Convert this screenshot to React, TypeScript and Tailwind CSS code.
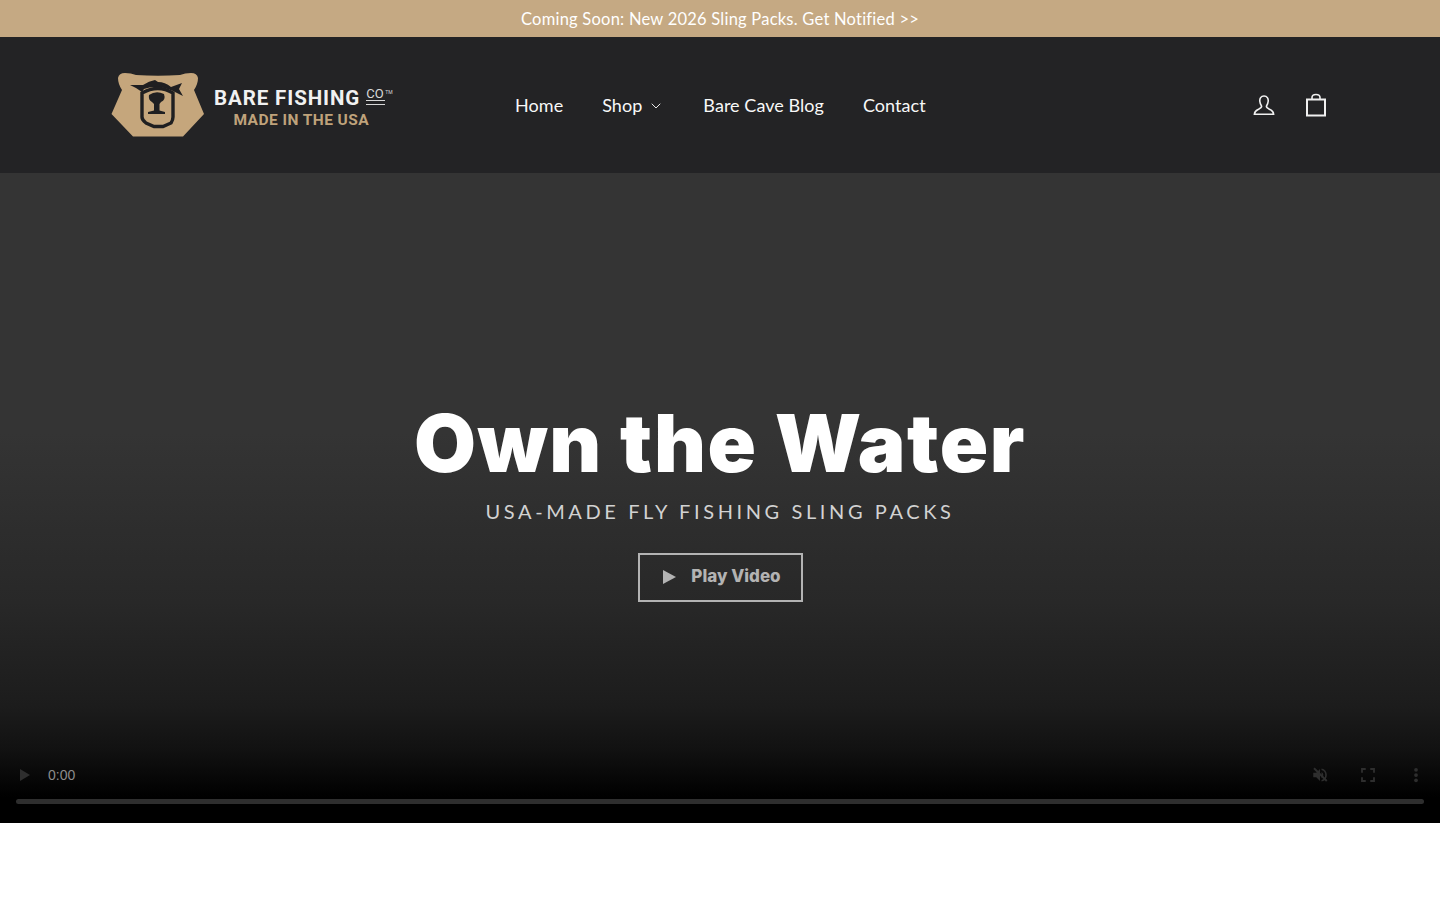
import { ChevronDown } from 'lucide-react';

function BearLogo() {
  return (
    <svg width="94" height="64" viewBox="0 0 94 64" className="shrink-0">
      <path
        d="M7 5 Q8 0 14 0 Q20 0 25 2 Q47 3.5 69 2 Q74 0 80 0 Q86 0 87 5 Q87 11 83 17 L93 41 L72 63.5 L22 63.5 L0.5 41 L11 17 Q7 11 7 5 Z"
        fill="#c5a67c"
      />
      <path
        d="M19 12 L32 12 Q38 8 44 7 L47 9 Q54 9 60 14 L71 10 L68 16 L72 23 L62 18 Q46 11 33 16 L31 19 Q26 15 19 12 Z"
        fill="#1f1f21"
      />
      <path
        d="M31 20 L31 44 Q31 47 35 50 L43 53.5 L52 53.5 L60 50 Q62 47 62 44 L62 20 Q47 11 31 20 Z"
        fill="none"
        stroke="#1f1f21"
        strokeWidth="3.4"
      />
      <path
        d="M38 22 Q45 17 53 21 Q55 27 50 29 L48.5 31 L48.5 37.5 L54 39 L54 41 L37 41 L37 39 L43 37.5 L43 31 L41 29 Q37 27 38 22 Z"
        fill="#1f1f21"
      />
    </svg>
  );
}

function Logo() {
  return (
    <div className="flex items-center gap-[10px] w-[284px]">
      <BearLogo />
      <div className="flex flex-col items-center pt-[5px] -ml-[1px] font-['Roboto',sans-serif] font-bold leading-none">
        <div className="flex items-start text-[#f1f1f1]">
          <span className="text-[20.5px] tracking-[0.9px] leading-[22px]">BARE FISHING</span>
          <span className="ml-[6px] text-[13px] leading-[13px] font-normal text-[#d8d8d8]">
            CO
            <span className="block w-[19px] h-[5px] border-y border-[#d8d8d8]"></span>
          </span>
          <span className="text-[5px] leading-[10px] font-normal text-[#d8d8d8]">TM</span>
        </div>
        <div className="mt-[2px] -ml-[4px] text-[15.5px] tracking-[0.45px] leading-[18px] text-[#bfa27b]">MADE IN THE USA</div>
      </div>
    </div>
  );
}

function AccountIcon() {
  return (
    <svg width="22" height="22" viewBox="0 0 22 22" fill="none" stroke="#f0f0f0" strokeWidth="1.6">
      <path d="M11 2 C7.8 2 6.6 4.6 6.8 7.2 C7 9.6 8 11.2 8.6 12.2 C8.8 13.8 7 14.6 5 15.6 C2.8 16.6 1.6 18 1.4 20.2 L20.6 20.2 C20.4 18 19.2 16.6 17 15.6 C15 14.6 13.2 13.8 13.4 12.2 C14 11.2 15 9.6 15.2 7.2 C15.4 4.6 14.2 2 11 2 Z" />
    </svg>
  );
}

function BagIcon() {
  return (
    <svg width="22" height="24" viewBox="0 0 22 24" fill="none" stroke="#f0f0f0" strokeWidth="2">
      <path d="M2 6.5 H20 V22.5 H2 Z" />
      <path d="M7 6.5 V4.5 Q7 1.5 11 1.5 Q15 1.5 15 4.5 V6.5" strokeWidth="1.6" />
    </svg>
  );
}

function VideoControls() {
  return (
    <div className="absolute bottom-0 left-0 right-0 h-[90px]">
      <div className="flex items-center h-[40px] mt-[22px] pl-[19px] pr-[16px]">
        <svg width="12" height="14" viewBox="0 0 12 14" className="shrink-0">
          <path d="M1 1 L11 7 L1 13 Z" fill="#2e2e2e" />
        </svg>
        <span className="ml-[17px] text-[14px] text-[#8c8c8c] font-['Liberation_Sans',sans-serif]">0:00</span>
        <div className="flex-1"></div>
        <svg width="18" height="18" viewBox="0 0 24 24" fill="#2e2e2e" className="mr-[30px]">
          <path d="M3 9v6h4l5 5V4L7 9H3zm13.5 3A4.5 4.5 0 0 0 14 8v8a4.5 4.5 0 0 0 2.5-4zM14 3.2v2.1a7 7 0 0 1 0 13.4v2.1a9 9 0 0 0 0-17.6z" />
          <path d="M4 3 L21 20" stroke="#2e2e2e" strokeWidth="2.5" />
        </svg>
        <svg width="18" height="18" viewBox="0 0 24 24" fill="none" stroke="#2e2e2e" strokeWidth="2.5" className="mr-[30px]">
          <path d="M4 9 V4 H9 M15 4 H20 V9 M20 15 V20 H15 M9 20 H4 V15" />
        </svg>
        <svg width="18" height="18" viewBox="0 0 24 24" fill="#2e2e2e" className="mr-[-1px]">
          <circle cx="12" cy="5" r="2.5" />
          <circle cx="12" cy="12" r="2.5" />
          <circle cx="12" cy="19" r="2.5" />
        </svg>
      </div>
      <div className="mx-[16px] mt-[4px] h-[5px] rounded-full bg-[#2e2e2e]"></div>
    </div>
  );
}

export default function App() {
  return (
    <div className="min-h-[900px] bg-white font-['Lato','Noto_Sans',sans-serif]">
      <div className="h-[37px] bg-[#c5a983] flex items-center justify-center pt-[1px] text-[16.5px] tracking-[0.23px] text-white">
        Coming Soon: New 2026 Sling Packs. Get Notified &gt;&gt;
      </div>

      <header className="h-[136px] bg-[#232325] flex items-center pl-[111px] pr-[113px]">
        <Logo />
        <nav className="flex items-center gap-[39px] ml-[120px] text-[18px] text-[#f8f8f8] tracking-[0.05px]">
          <a>Home</a>
          <a className="flex items-center gap-[6px]">
            Shop <ChevronDown size={16} strokeWidth={1.4} className="mt-[2px]" />
          </a>
          <a>Bare Cave Blog</a>
          <a>Contact</a>
        </nav>
        <div className="flex-1"></div>
        <div className="flex items-center gap-[30px]">
          <AccountIcon />
          <BagIcon />
        </div>
      </header>

      <section className="relative h-[650px] bg-[linear-gradient(#343434_40%,#282828_66%,#1c1c1c_82%,#111111_89%,#000000_96%)] flex flex-col items-center pt-[225px] text-white">
        <h1 className="text-[80px] leading-[90px] font-black font-['Inter',sans-serif] tracking-[1.5px]">Own the Water</h1>
        <p className="mt-[8px] text-[20px] leading-[30px] tracking-[3.6px] text-[#d2d2d2]">USA-MADE FLY FISHING SLING PACKS</p>
        <button className="mt-[27px] w-[165px] h-[49px] border-2 border-[#b3b3b3] flex items-center justify-center gap-[15px] pl-[4px] pb-[2px] text-[#b3b3b3] text-[17px] font-extrabold font-['Inter',sans-serif]">
          <svg width="13" height="14" viewBox="0 0 13 14">
            <path d="M0 0 L13 7 L0 14 Z" fill="#b3b3b3" />
          </svg>
          Play Video
        </button>
        <VideoControls />
      </section>
    </div>
  );
}
